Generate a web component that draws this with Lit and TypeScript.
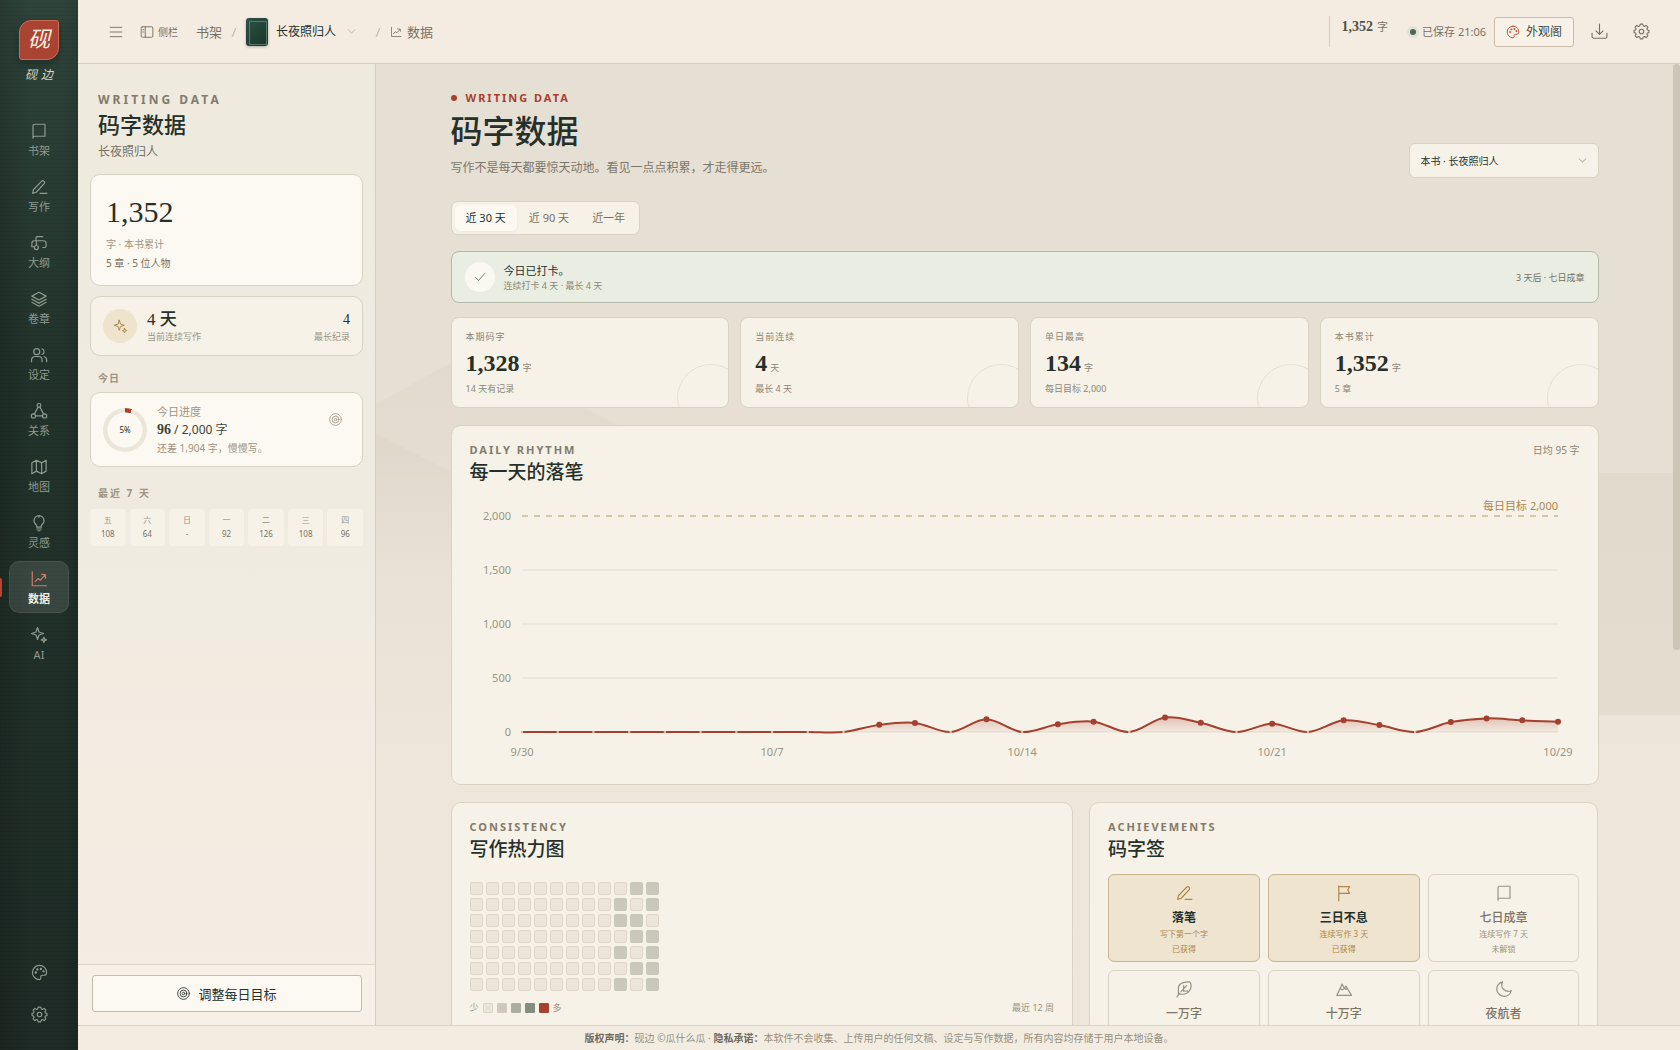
import { LitElement, html, svg, css } from "lit";
import { customElement, property, state } from "lit/decorators.js";
import { classMap } from "lit/directives/class-map.js";

const ICONS: Record<string, unknown> = {
  book: svg`<path d="M4 21.500V5a2 2 0 0 1 2-2h14V19H6a2 2 0 0 0-2 2"/>`,
  pen: svg`<path d="M3.500 20.500l1-4.800L15.600 4.200a1.900 1.900 0 0 1 2.800 0l.5.5a1.900 1.900 0 0 1 0 2.700L8.300 19z M13.500 20.500H22.500"/>`,
  outline: svg`<path d="M17 3.500H9.500A1.500 1.500 0 0 0 8 5v4M2.500 17v-4.500A3.500 3.500 0 0 1 6 9H18a3.500 3.500 0 0 1 3.500 3.500V16a2 2 0 0 1-2 2H17M2.500 17h3M8.500 10v5"/><circle cx="8.500" cy="18" r="2.700"/>`,
  layers: svg`<path d="M12 3l9.500 5.200L12 13.400 2.500 8.200z M2.500 12.300L12 17.500l9.500-5.200 M2.500 16.400L12 21.600l9.500-5.200"/>`,
  users: svg`<circle cx="9" cy="7.500" r="4"/><path d="M2 21v-2.500A4.500 4.500 0 0 1 6.500 14h5a4.500 4.500 0 0 1 4.500 4.500V21 M16 3.700a4 4 0 0 1 0 7.600 M19 14.300a4.500 4.500 0 0 1 3.200 4.300V21"/>`,
  nodes: svg`<circle cx="12" cy="4.500" r="2.500"/><circle cx="4.500" cy="18.500" r="2.800"/><circle cx="19.500" cy="18.500" r="2.800"/><path d="M10.800 6.800L5.800 16 M13.200 6.800l5 9.200 M7.300 18.500h9.400"/>`,
  map: svg`<path d="M2.500 6.500L8.500 3l7 3.500 6-3.500v14.500l-6 3.500-7-3.500-6 3.500z M8.500 3v14.500 M15.500 6.500V21"/>`,
  bulb: svg`<path d="M9 17.500v-1.200c0-1-.6-1.800-1.400-2.600A6.600 6.600 0 0 1 5.300 9 6.700 6.700 0 0 1 12 2.300 6.700 6.700 0 0 1 18.700 9c0 1.900-.9 3.500-2.300 4.700-.8.800-1.400 1.600-1.400 2.600v1.200z M9 20h6 M10.500 22.300h3 M12 2.300v2"/>`,
  chart: svg`<path d="M3 2.500v18.500H22 M7 15.500l3.500-4 3.500 2 6-7 M15.500 5.800l4.800.4.500 4.700"/>`,
  spark: svg`<path d="M10 2l2 6 6 2-6 2-2 6-2-6-6-2 6-2z M18.500 15l1 2.500 2.500 1-2.500 1-1 2.500-1-2.500-2.500-1 2.500-1z"/>`,
  palette: svg`<path d="M12 2a10 10 0 1 0 0 20c1.400 0 2-1 2-2.200 0-.7-.3-1.300-.3-1.900 0-1.200.9-2 2.100-2h2.700c2 0 3.500-1.500 3.500-3.600C22 6.200 17.500 2 12 2z"/><circle cx="6.800" cy="12" r=".9"/><circle cx="9" cy="7.600" r=".9"/><circle cx="14" cy="7" r=".9"/><circle cx="17.600" cy="10.400" r=".9"/>`,
  gear: svg`<circle cx="12" cy="12" r="3.200"/><path d="M10.200 1.500h3.600l.7 2.600 1.600.7 2.400-1.400 2.500 2.500-1.400 2.400.7 1.600 2.200.5v3.200l-2.200.5-.7 1.600 1.400 2.400-2.500 2.500-2.400-1.400-1.600.7-.7 2.600h-3.600l-.7-2.600-1.600-.7-2.400 1.400L3 18.100l1.400-2.400-.7-1.600-2.200-.5v-3.200l2.200-.5.7-1.600L3 5.900l2.500-2.500 2.400 1.400 1.600-.7z"/>`,
  menu: svg`<path d="M2 4h20M2 12h20M2 20h20"/>`,
  panel: svg`<rect x="2" y="3" width="20" height="18" rx="2"/><path d="M9 3v18M4.800 8h1.800M4.800 12h1.800"/>`,
  down: svg`<path d="M3 7.500l9 8.500 9-8.500"/>`,
  download: svg`<path d="M12 1.500v14 M7 11l5 5 5-5 M1.500 14.500V19a2.500 2.500 0 0 0 2.500 2.500h16a2.500 2.500 0 0 0 2.500-2.500v-4.500"/>`,
  target: svg`<circle cx="12" cy="12" r="10.800"/><circle cx="12" cy="12" r="6.300"/><circle cx="12" cy="12" r="2.300"/>`,
  check: svg`<path d="M3 13l6 6L21.500 5"/>`,
  flag: svg`<path d="M5 22.500V2.500 M5 3.500h14.500l-2.500 4.500 2.500 4.500H5"/>`,
  feather: svg`<path d="M2.500 22.500l4-5 M4.500 20V11.500C4.500 6 9 2 19.500 2.500 24 8 20.500 17.500 11 19H5.500 M8 15.500l7.500-8 M11.500 7.500V15l5.500-.5"/>`,
  peak: svg`<path d="M2.500 20.500L9.500 5.500l3 5.500 2-3 7.500 12.500z M7 11l2.500 2.200 3-2.200 2 1.500 2-1"/>`,
  moon: svg`<path d="M10 2.500A9.800 9.800 0 1 0 21.800 14 8.600 8.600 0 0 1 10 2.500z"/>`,
};

@customElement("ink-icon")
class InkIcon extends LitElement {
  @property() name = "book";
  static styles = css`
    :host { display: inline-flex; flex: none; width: 18px; height: 18px; }
    svg { width: 100%; height: 100%; fill: none; stroke: currentColor; stroke-width: 1.6; stroke-linecap: round; stroke-linejoin: round; }
  `;
  render() {
    return html`<svg viewBox="0 0 24 24" aria-hidden="true">${ICONS[this.name]}</svg>`;
  }
}

const WORDS = [0, 0, 0, 0, 0, 0, 0, 0, 0, 0, 66, 84, 0, 118, 0, 72, 96, 0, 134, 86, 0, 77, 0, 108, 64, 0, 92, 126, 108, 96];
const GOAL = 2000;

@customElement("rhythm-chart")
class RhythmChart extends LitElement {
  static styles = css`
    :host { display: block; }
    svg { display: block; width: 100%; height: auto; overflow: visible; font: 11px "Noto Sans", "Noto Sans CJK SC", sans-serif; }
    .grid { stroke: #e3decf; }
    .goal { stroke: #b39a6d; stroke-dasharray: 6 6; }
    .axis { fill: #9b9484; }
    .goal-text { fill: #a9874e; text-anchor: end; }
    .y { text-anchor: end; }
    .x { text-anchor: middle; }
    .line { fill: none; stroke: #a3402f; stroke-width: 2; }
    .area { fill: url(#fade); }
    .dot { fill: #a3402f; }
    .zero { fill: #dfb9a4; }
  `;
  render() {
    const x = (i: number) => 52 + (i * 1036) / 29;
    const y = (v: number) => 242 - (v * 216) / GOAL;
    const at = (i: number) => WORDS[Math.max(0, Math.min(29, i))];
    let d = `M${x(0)} ${y(at(0))}`;
    const step = 1036 / 29 / 3;
    for (let i = 0; i < 29; i++) {
      const a = at(i) + (at(i + 1) - at(i - 1)) / 6;
      const b = at(i + 1) - (at(i + 2) - at(i)) / 6;
      d += `C${x(i) + step} ${y(a)} ${x(i + 1) - step} ${y(b)} ${x(i + 1)} ${y(at(i + 1))}`;
    }
    const days: [number, string][] = [[0, "9/30"], [7, "10/7"], [14, "10/14"], [21, "10/21"], [29, "10/29"]];
    return html`<svg viewBox="0 0 1110 278" role="img" aria-label="每一天的落笔">
      <defs><linearGradient id="fade" x1="0" y1="0" x2="0" y2="1">
        <stop offset="0" stop-color="#a8402f" stop-opacity=".28"/><stop offset="1" stop-color="#a8402f" stop-opacity=".03"/>
      </linearGradient></defs>
      ${[0, 500, 1000, 1500].map((v) => svg`<line class="grid" x1="52" x2="1088" y1=${y(v)} y2=${y(v)}/>`)}
      ${[0, 500, 1000, 1500, 2000].map((v) => svg`<text class="axis y" x="41" y=${y(v) + 4}>${v.toLocaleString("en-US")}</text>`)}
      <line class="goal" x1="52" x2="1088" y1=${y(GOAL)} y2=${y(GOAL)}/>
      <text class="goal-text" x="1088" y="20">每日目标 2,000</text>
      <path class="area" d="${d}L1088 242L52 242Z"/>
      <path class="line" d=${d}/>
      ${WORDS.map((v, i) => svg`<circle class=${v ? "dot" : "zero"} cx=${x(i)} cy=${y(v)} r=${v ? 3 : 1.3}/>`)}
      ${days.map(([i, t]) => svg`<text class="axis x" x=${x(i)} y="266">${t}</text>`)}
    </svg>`;
  }
}

const NAV = [
  ["book", "书架"], ["pen", "写作"], ["outline", "大纲"], ["layers", "卷章"], ["users", "设定"],
  ["nodes", "关系"], ["map", "地图"], ["bulb", "灵感"], ["chart", "数据"], ["spark", "AI"],
];
const WEEK = [["五", "108"], ["六", "64"], ["日", "-"], ["一", "92"], ["二", "126"], ["三", "108"], ["四", "96"]];
const STATS = [
  ["本期码字", "1,328", "字", "14 天有记录"],
  ["当前连续", "4", "天", "最长 4 天"],
  ["单日最高", "134", "字", "每日目标 2,000"],
  ["本书累计", "1,352", "字", "5 章"],
];
const HEAT = ["000000000011", "000000000101", "000000000110", "000000000011", "000000000101", "000000000011", "000000000101"];
const BADGES: { icon: string; name: string; desc?: string; got?: boolean }[] = [
  { icon: "pen", name: "落笔", desc: "写下第一个字", got: true },
  { icon: "flag", name: "三日不息", desc: "连续写作 3 天", got: true },
  { icon: "book", name: "七日成章", desc: "连续写作 7 天" },
  { icon: "feather", name: "一万字" },
  { icon: "peak", name: "十万字" },
  { icon: "moon", name: "夜航者" },
];

@customElement("app-root")
class AppRoot extends LitElement {
  @state() private range = 0;

  static styles = css`
    :host {
      display: block;
      --serif: "Liberation Serif", "Noto Sans CJK SC", serif;
      --ink: #26302b; --soft: #777165; --mute: #9c9484; --line: #d9d3c4; --card: #f6f2e7; --bright: #fcf9f2; --red: #a8402f; --gold: #ad8748;
      font: 12px/16px "Noto Sans", "Noto Sans CJK SC", sans-serif;
      color: var(--ink);
    }
    * { box-sizing: border-box; }
    h1, h2, p { margin: 0; }
    button, select { font: inherit; color: inherit; background: none; border: 0; padding: 0; margin: 0; cursor: pointer; }
    a { color: inherit; text-decoration: none; }
    .app { display: grid; grid-template: minmax(0, 1fr) / 78px minmax(0, 1fr); height: 100vh; overflow: hidden; background: #f4eee3; }

    .rail { display: flex; flex-direction: column; align-items: center; padding: 20px 0 15px; color: #8f9b90;
      background: repeating-linear-gradient(#0000 0 3px, #00000012 3px 4px), linear-gradient(90deg, #00000026, #0000 40%, #0000 80%, #0000001a), linear-gradient(#2f443b, #22332b 35%, #1f2b26); }
    .logo { width: 40px; height: 40px; display: grid; place-items: center; border: 1px solid #c86b57; border-radius: 12px 3px 12px 3px; background: #aa4331; color: #fbeee0; font: italic 22px/24px var(--serif); box-shadow: 0 4px 8px #0004; }
    .brand { font: italic 12px/16px var(--serif); letter-spacing: 4px; padding-left: 4px; color: #d5d6c6; margin-top: 7px; }
    .nav { display: flex; flex-direction: column; gap: 4px; margin-top: 30px; width: 100%; align-items: center; }
    .nav a { position: relative; display: flex; flex-direction: column; align-items: center; gap: 4px; width: 60px; height: 52px; padding-top: 8px; border: 1px solid #0000; border-radius: 10px; font-size: 11px; line-height: 14px; }
    .nav a.on { background: #ffffff1c; border-color: #ffffff14; color: #f3eee0; font-weight: 700; }
    .nav a.on ink-icon { color: #cf7a65; }
    .nav a.on::before { content: ""; position: absolute; left: -10px; top: 16px; width: 2px; height: 19px; background: #b8452f; border-radius: 0 3px 3px 0; }
    .tools { margin-top: auto; display: flex; flex-direction: column; }
    .tools button { width: 42px; height: 42px; display: grid; place-items: center; }
    .tools ink-icon { width: 17px; height: 17px; }

    .shell { display: grid; grid-template-rows: 64px minmax(0, 1fr) 25px; min-width: 0; }
    .top { display: flex; align-items: center; padding: 0 18px 0 31px; border-bottom: 1px solid #d6cfc1; background: #f4ece1; color: var(--soft); }
    .crumbs { display: flex; align-items: center; flex: 1; font-size: 13px; }
    .crumbs > *, .status > * { display: flex; align-items: center; flex: none; }
    .menu ink-icon { width: 14px; height: 14px; }
    .side-toggle { margin-left: 17px; gap: 4px; font-size: 10px; }
    .side-toggle ink-icon { width: 14px; height: 14px; }
    .shelf { margin-left: 18px; }
    .slash { width: 24px; justify-content: center; color: #c0b8a8; }
    .cover { width: 22px; height: 28px; border-radius: 3px; padding: 3px; background: linear-gradient(135deg, #2c5346, #183328); box-shadow: 0 1px 3px #0004; }
    .cover::before { content: ""; display: block; width: 16px; height: 22px; border: 1px solid #58786a; }
    .book { gap: 8px; color: var(--ink); font-size: 12px; }
    .book ink-icon { width: 9px; height: 9px; color: var(--mute); margin-left: 3px; }
    .book + .slash { margin-left: 10px; }
    .here { gap: 5px; }
    .here ink-icon { width: 12px; height: 12px; }
    .status { display: flex; align-items: center; }
    .count { height: 31px; padding: 3px 12px 0; gap: 4px; border-left: 1px solid #d6cfc1; align-items: flex-start; font-size: 11px; }
    .count b { font: 700 14px/16px var(--serif); color: #4c534b; }
    .saved { gap: 6px; margin: 0 8px 0 10px; font-size: 11px; }
    .saved::before { content: ""; width: 6px; height: 6px; border-radius: 50%; background: #4f6557; box-shadow: 0 0 0 3px #dfe3d6; }
    .look { width: 80px; height: 30px; justify-content: center; gap: 6px; border: 1px solid #c9bba8; border-radius: 3px; background: #f8f2e8; color: #454b44; }
    .look ink-icon { width: 14px; height: 14px; color: #b8452f; }
    .tool { width: 42px; height: 34px; justify-content: center; }
    .tool.first { margin-left: 4px; }
    .tool ink-icon { width: 17px; height: 17px; }

    .mid { display: grid; grid-template: minmax(0, 1fr) / 298px minmax(0, 1fr); min-height: 0; }
    .side { display: flex; flex-direction: column; border-right: 1px solid #d6cfc1; background: linear-gradient(#efeade, #f0ebe0 50%, #f4ede3); min-height: 0; }
    .side-body { flex: 1; padding: 28px 12px 0; min-height: 0; overflow: hidden; }
    .side-head { padding-left: 8px; margin-bottom: 14px; color: var(--soft); }
    .eyebrow { font-size: 11px; line-height: 16px; font-weight: 700; letter-spacing: 2px; color: #827b6d; }
    .side-head .eyebrow { font-size: 12px; letter-spacing: 3px; }
    .side-head h2 { font: 500 22px/30px var(--serif); margin: 3px 0; color: var(--ink); }
    .panel { border: 1px solid var(--line); border-radius: 10px; background: var(--card); }
    .total { padding: 17px 15px 14px; background: var(--bright); font-size: 10px; color: var(--soft); }
    .total strong { display: block; font: 500 30px/40px var(--serif); color: var(--ink); margin-bottom: 4px; }
    .total .unit { color: var(--mute); margin-bottom: 3px; }
    .streak { display: flex; align-items: center; gap: 10px; height: 60px; padding: 0 12px; margin: 10px 0 15px; font-size: 9px; line-height: 12px; color: var(--mute); }
    .streak .round { width: 34px; height: 34px; border-radius: 50%; display: grid; place-items: center; background: #eee3cd; color: var(--gold); }
    .round ink-icon { width: 15px; height: 15px; }
    .streak strong { display: block; font: 500 17px/20px var(--serif); color: var(--ink); margin-bottom: 1px; }
    .streak .best { margin-left: auto; text-align: right; }
    .streak .best strong { font-size: 14px; }
    .label { font-size: 10px; line-height: 14px; font-weight: 700; letter-spacing: 1px; color: var(--mute); padding-left: 8px; margin-bottom: 7px; }
    .today { display: flex; align-items: center; gap: 10px; height: 75px; padding: 0 12px; background: var(--bright); margin-bottom: 19px; }
    .today + .label { letter-spacing: 2px; margin-bottom: 9px; }
    .ring { width: 44px; height: 44px; border-radius: 50%; display: grid; place-items: center; font-size: 8px;
      background: radial-gradient(circle, var(--bright) 0 17px, #0000 18px), conic-gradient(var(--red) 5%, #ebe6d9 5%); }
    .today .text { font-size: 11px; color: var(--mute); }
    .today .text p:nth-child(2) { font-size: 12px; line-height: 20px; color: #3c443e; }
    .today b { font-family: var(--serif); font-size: 14px; }
    .today .text p:nth-child(3) { font-size: 10px; }
    .today > ink-icon { width: 13px; height: 13px; margin: 0 8px 20px auto; color: var(--mute); }
    .week { display: grid; grid-template-columns: repeat(7, 1fr); gap: 4px; }
    .week div { height: 37px; border-radius: 4px; background: #f6f2e8; text-align: center; font-size: 8px; line-height: 14px; padding-top: 4px; color: var(--mute); }
    .week span { display: block; color: var(--soft); }
    .side-foot { border-top: 1px solid var(--line); padding: 10px 13px 13px 14px; background: #f6f0e6; }
    .side-foot button { width: 100%; height: 37px; display: flex; align-items: center; justify-content: center; gap: 8px; border: 1px solid #c6bcaa; border-radius: 3px; background: var(--bright); font-size: 13px; }
    .side-foot ink-icon { width: 13px; height: 13px; }

    .main { position: relative; display: grid; grid-template: minmax(0, 1fr) / minmax(0, 1fr) 7px; min-height: 0; background: linear-gradient(#e6dfd3, #e7dfd3 40%, #eee6db 75%, #ece7da); }
    .scene { position: absolute; inset: 0; width: 100%; height: 100%; }
    .thumb { position: relative; height: 61%; border-radius: 4px; background: #cdc5b6; }
    .scroll { position: relative; overflow-y: auto; scrollbar-width: none; min-height: 0; }
    .page { max-width: 1180px; margin: 0 auto; padding: 26px 16px 40px; }
    .head { display: flex; justify-content: space-between; align-items: flex-end; }
    .head .eyebrow { display: flex; align-items: center; gap: 9px; color: var(--red); }
    .head .eyebrow::before { content: ""; width: 6px; height: 6px; border-radius: 50%; background: var(--red); }
    h1 { font: 500 32px/42px var(--serif); margin: 5px 0; }
    .head .sub { font-size: 12px; line-height: 20px; color: #7d766a; }
    .pick { position: relative; width: 190px; }
    .pick select { appearance: none; width: 100%; height: 35px; padding: 0 11px; border: 1px solid var(--line); border-radius: 6px; background: var(--card); font-size: 10px; }
    .pick ink-icon { position: absolute; right: 12px; top: 13px; width: 9px; height: 9px; color: var(--soft); pointer-events: none; }
    .tabs { display: inline-flex; gap: 1px; height: 34px; padding: 3px; margin-top: 23px; border: 1px solid var(--line); border-radius: 7px; background: var(--card); }
    .tabs button { padding: 0 11px; border-radius: 5px; font-size: 11px; color: var(--soft); }
    .tabs button.on { background: var(--bright); color: var(--ink); box-shadow: 0 1px 3px #0000000d; }
    .banner { display: flex; align-items: center; gap: 9px; height: 52px; margin: 16px 0 14px; padding: 0 13px; border: 1px solid #b3b8a8; border-radius: 8px; background: #eaede2; font-size: 9px; line-height: 13px; color: #8c8a7a; }
    .banner .tick { width: 30px; height: 30px; border-radius: 50%; display: grid; place-items: center; background: #f9f8f1; color: #4d5c50; }
    .tick ink-icon { width: 12px; height: 12px; }
    .banner strong { display: block; font-size: 11px; line-height: 17px; font-weight: 400; color: var(--ink); }
    .banner .next { margin-left: auto; color: var(--soft); }
    .stats { display: grid; grid-template-columns: repeat(4, 1fr); gap: 11px; }
    .stat { position: relative; overflow: hidden; height: 91px; padding: 13px 14px; border-radius: 8px; font-size: 9px; line-height: 12px; color: #8d8677; }
    .stat .name { letter-spacing: 1px; }
    .stat .num { display: flex; align-items: baseline; gap: 3px; height: 28px; margin: 6px 0; }
    .stat b { font: 700 24px/28px var(--serif); color: var(--ink); }
    .stat::after { content: ""; position: absolute; right: -17px; bottom: -25px; width: 66px; height: 66px; border: 1px solid #e5e0d2; border-radius: 50%; }
    .box { padding: 16px 18px; }
    .box-head { display: flex; justify-content: space-between; font-size: 10px; color: #8d8677; }
    .box h2 { font: 500 19px/26px var(--serif); color: var(--ink); margin-top: 2px; }
    .rhythm { margin: 17px 0; }
    .rhythm rhythm-chart { margin-top: 4px; }
    .pair { display: grid; grid-template-columns: 11fr 9fr; gap: 16px; }
    .heat { display: grid; grid-template-columns: repeat(12, 13px); gap: 3px; margin-top: 19px; }
    .cell { height: 13px; border-radius: 2px; border: 1px solid #ded7c9; background: #ece6da; }
    .cell.hit { background: #c8c9bb; border-color: #c8c9bb; }
    .legend { display: flex; align-items: center; gap: 4px; margin-top: 10px; font-size: 9px; line-height: 14px; color: var(--mute); }
    .legend i { width: 10px; height: 10px; border-radius: 1px; background: #ece4d8; border: 1px solid #ded5c8; }
    .legend .l1 { background: #cbcabd; border-color: #cbcabd; }
    .legend .l2 { background: #abaea0; border-color: #abaea0; }
    .legend .l3 { background: #84907f; border-color: #84907f; }
    .legend .l4 { background: var(--red); border-color: var(--red); }
    .legend .span { margin-left: auto; }
    .badges { display: grid; grid-template-columns: repeat(3, 1fr); gap: 8px; margin-top: 11px; }
    .badge { display: flex; flex-direction: column; align-items: center; height: 88px; padding-top: 9px; border: 1px solid var(--line); border-radius: 6px; color: #9a9384; font-size: 8px; line-height: 12px; }
    .badge ink-icon { width: 18px; height: 18px; }
    .badge strong { font: 500 12px/16px var(--serif); color: #7d7668; margin: 8px 0 2px; }
    .badge p + p { margin-top: 3px; }
    .badge.got { background: #efe4cf; border-color: #c9b68f; color: var(--gold); }
    .badge.got strong { color: var(--ink); font-weight: 700; }
    .foot { display: flex; align-items: center; justify-content: center; border-top: 1px solid #d9d3c4; background: #f3ede1; font-size: 10px; color: #968f80; white-space: pre; }
    .foot b { color: #6f6a5f; }
  `;

  private item(icon: string, text: string) {
    const on = text === "数据";
    return html`<a href="#" class=${classMap({ on })}><ink-icon name=${icon}></ink-icon>${text}</a>`;
  }

  render() {
    return html`<div class="app">
      <aside class="rail">
        <div class="logo">砚</div>
        <div class="brand">砚边</div>
        <nav class="nav">${NAV.map(([i, t]) => this.item(i, t))}</nav>
        <div class="tools">
          <button aria-label="外观阁"><ink-icon name="palette"></ink-icon></button>
          <button aria-label="设置"><ink-icon name="gear"></ink-icon></button>
        </div>
      </aside>
      <div class="shell">
        <header class="top">
          <nav class="crumbs">
            <button class="menu" aria-label="菜单"><ink-icon name="menu"></ink-icon></button>
            <button class="side-toggle"><ink-icon name="panel"></ink-icon>侧栏</button>
            <a class="shelf" href="#">书架</a>
            <span class="slash">/</span>
            <button class="book"><span class="cover"></span>长夜照归人<ink-icon name="down"></ink-icon></button>
            <span class="slash">/</span>
            <span class="here"><ink-icon name="chart"></ink-icon>数据</span>
          </nav>
          <div class="status">
            <span class="count"><b>1,352</b> 字</span>
            <span class="saved">已保存 21:06</span>
            <button class="look"><ink-icon name="palette"></ink-icon>外观阁</button>
            <button class="tool first" aria-label="下载"><ink-icon name="download"></ink-icon></button>
            <button class="tool" aria-label="设置"><ink-icon name="gear"></ink-icon></button>
          </div>
        </header>
        <div class="mid">
          ${this.side()}
          <main class="main">
            <svg class="scene" viewBox="0 0 1304 961" preserveAspectRatio="none" aria-hidden="true">
              <defs>
                <linearGradient id="hill" x1="0" y1="0" x2="0" y2="1"><stop offset="0" stop-color="#cfc6b8" stop-opacity=".2"/><stop offset="1" stop-color="#cfc6b8" stop-opacity="0"/></linearGradient>
              </defs>
              <path fill="url(#hill)" d="M0 340L40 318 80 296 130 290 200 340 300 390V500H0z"/>
              <path fill="url(#hill)" d="M0 370L40 390 80 410 160 430V520H0z"/>
              <rect x="1180" y="409" width="124" height="242" fill="#dcd5c6" fill-opacity=".5"/>
            </svg>
            <div class="scroll"><div class="page">${this.page()}</div></div>
            <div class="thumb"></div>
          </main>
        </div>
        <footer class="foot"><b>版权声明：</b>砚边 ©瓜什么瓜 · <b>隐私承诺：</b>本软件不会收集、上传用户的任何文稿、设定与写作数据，所有内容均存储于用户本地设备。</footer>
      </div>
    </div>`;
  }

  private side() {
    return html`<aside class="side">
      <div class="side-body">
        <div class="side-head"><p class="eyebrow">WRITING DATA</p><h2>码字数据</h2><p>长夜照归人</p></div>
        <section class="panel total"><strong>1,352</strong><p class="unit">字 · 本书累计</p><p>5 章 · 5 位人物</p></section>
        <section class="panel streak">
          <span class="round"><ink-icon name="spark"></ink-icon></span>
          <div><strong>4 天</strong>当前连续写作</div>
          <div class="best"><strong>4</strong>最长纪录</div>
        </section>
        <p class="label">今日</p>
        <section class="panel today">
          <span class="ring">5%</span>
          <div class="text"><p>今日进度</p><p><b>96</b> / 2,000 字</p><p>还差 1,904 字，慢慢写。</p></div>
          <ink-icon name="target"></ink-icon>
        </section>
        <p class="label">最近 7 天</p>
        <div class="week">${WEEK.map(([d, n]) => html`<div>${d}<span>${n}</span></div>`)}</div>
      </div>
      <div class="side-foot"><button><ink-icon name="target"></ink-icon>调整每日目标</button></div>
    </aside>`;
  }

  private page() {
    return html`
      <header class="head">
        <div><p class="eyebrow">WRITING DATA</p><h1>码字数据</h1><p class="sub">写作不是每天都要惊天动地。看见一点点积累，才走得更远。</p></div>
        <div class="pick"><select aria-label="统计范围"><option>本书 · 长夜照归人</option></select><ink-icon name="down"></ink-icon></div>
      </header>
      <div class="tabs">
        ${["近 30 天", "近 90 天", "近一年"].map((t, i) => html`<button class=${classMap({ on: this.range === i })} @click=${() => (this.range = i)}>${t}</button>`)}
      </div>
      <section class="banner">
        <span class="tick"><ink-icon name="check"></ink-icon></span>
        <div><strong>今日已打卡。</strong>连续打卡 4 天 · 最长 4 天</div>
        <span class="next">3 天后 · 七日成章</span>
      </section>
      <section class="stats">
        ${STATS.map(([n, v, u, s]) => html`<div class="panel stat"><p class="name">${n}</p><p class="num"><b>${v}</b>${u}</p><p>${s}</p></div>`)}
      </section>
      <section class="panel box rhythm">
        <div class="box-head"><div><p class="eyebrow">DAILY RHYTHM</p><h2>每一天的落笔</h2></div><span>日均 95 字</span></div>
        <rhythm-chart></rhythm-chart>
      </section>
      <div class="pair">
        <section class="panel box">
          <p class="eyebrow">CONSISTENCY</p><h2>写作热力图</h2>
          <div class="heat">${HEAT.flatMap((r) => [...r].map((c) => html`<span class=${classMap({ cell: true, hit: c === "1" })}></span>`))}</div>
          <div class="legend">少 <i></i><i class="l1"></i><i class="l2"></i><i class="l3"></i><i class="l4"></i> 多<span class="span">最近 12 周</span></div>
        </section>
        <section class="panel box">
          <p class="eyebrow">ACHIEVEMENTS</p><h2>码字签</h2>
          <div class="badges">${BADGES.map((b) => html`<div class=${classMap({ badge: true, got: !!b.got })}>
            <ink-icon name=${b.icon}></ink-icon><strong>${b.name}</strong>
            ${b.desc ? html`<p>${b.desc}</p><p>${b.got ? "已获得" : "未解锁"}</p>` : null}
          </div>`)}</div>
        </section>
      </div>`;
  }
}
